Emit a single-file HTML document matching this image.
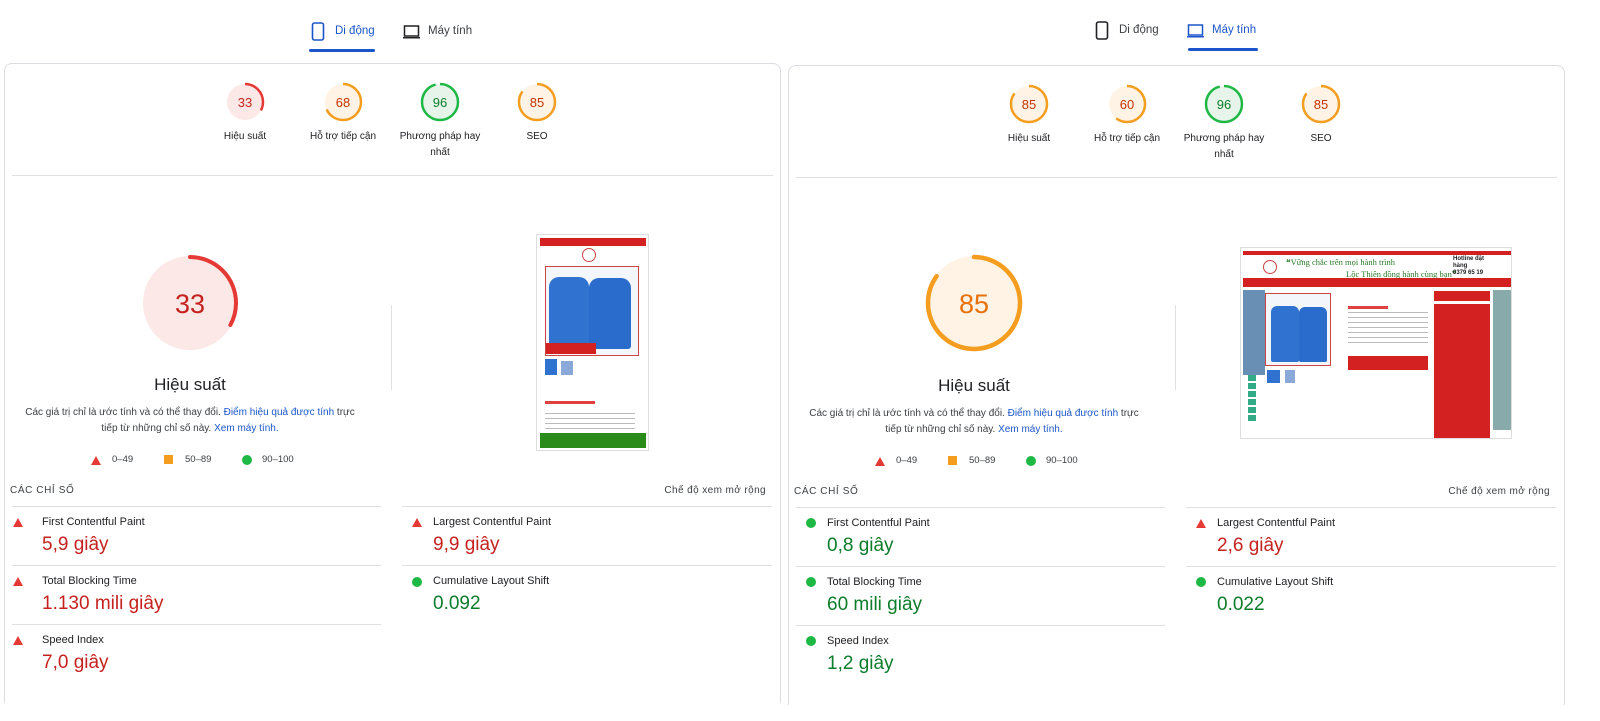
<!DOCTYPE html><html><head><meta charset="utf-8"><style>
*{margin:0;padding:0;box-sizing:border-box}
body{width:1600px;height:721px;background:#fff;font-family:"Liberation Sans","Noto Sans CJK SC",sans-serif;color:#202124;position:relative;overflow:hidden}
.p{position:absolute;top:0;width:784px;height:721px}
.a{position:absolute}
.card{position:absolute;left:4px;top:63px;width:777px;height:640px;border:1px solid #dadce0;border-bottom:none;border-radius:8px 8px 0 0}
.tab{font-size:11.5px;color:#3c4043}
.tab.on{color:#1a56c9}
.ul{height:3px;background:#1a56c9;border-radius:2px}
.g{position:absolute;width:40px;height:40px}
.gl{position:absolute;width:80px;margin-left:15px;text-align:center;font-size:10px;line-height:16px;color:#202124}
.gl.w{width:100px;margin-left:5px}
.gn{font-size:13px;font-family:"Liberation Sans",sans-serif}
.hr{position:absolute;height:1px;background:#e0e0e0}
.ml{position:absolute;font-size:11px;color:#202124}
.mv{position:absolute;font-size:19px}
.red{color:#c5221f}.grn{color:#0d7c2b}
.tri{position:absolute;width:0;height:0;border-left:5px solid transparent;border-right:5px solid transparent;border-bottom:9px solid #e53935}
.dot{position:absolute;width:10px;height:10px;border-radius:50%;background:#1eb845}
.sm{font-size:10px;color:#3c4043}
a{color:#1a56c9;text-decoration:none}
</style></head><body>

<!-- LEFT PANEL -->
<div class="p" style="left:0">
 <svg class="a" style="left:311px;top:22px" width="14" height="19" viewBox="0 0 14 19"><rect x="1.5" y="1" width="11" height="17" rx="2" fill="none" stroke="#1a56c9" stroke-width="1.6"/></svg>
 <div class="a tab on" style="left:335px;top:25px">Di động</div>
 <div class="a ul" style="left:309px;top:49px;width:66px"></div>
 <svg class="a" style="left:402px;top:25px" width="19" height="14" viewBox="0 0 19 14"><rect x="2.5" y="1" width="14" height="10" fill="none" stroke="#202124" stroke-width="1.5"/><rect x="1" y="12" width="17" height="1.5" fill="#202124"/></svg>
 <div class="a tab" style="left:428px;top:25px">Máy tính</div>
 <div class="card"></div>

 <svg class="g" style="left:225px;top:82px" viewBox="0 0 40 40"><circle cx="20" cy="20" r="18" fill="#fce8e6"/><circle cx="20" cy="20" r="18" fill="none" stroke="#e53935" stroke-width="2.5" stroke-dasharray="37 200" transform="rotate(-90 20 20)"/><text x="20" y="25" text-anchor="middle" class="gn" fill="#c5221f">33</text></svg>
 <svg class="g" style="left:323px;top:82px" viewBox="0 0 40 40"><circle cx="20" cy="20" r="18" fill="#fff3e6"/><circle cx="20" cy="20" r="18" fill="none" stroke="#f49d1e" stroke-width="2.5" stroke-dasharray="77 200" transform="rotate(-90 20 20)"/><text x="20" y="25" text-anchor="middle" class="gn" fill="#c33300">68</text></svg>
 <svg class="g" style="left:420px;top:82px" viewBox="0 0 40 40"><circle cx="20" cy="20" r="18" fill="#e6f4ea"/><circle cx="20" cy="20" r="18" fill="none" stroke="#1eb845" stroke-width="2.5" stroke-dasharray="108.5 200" transform="rotate(-90 20 20)"/><text x="20" y="25" text-anchor="middle" class="gn" fill="#0d7c2b">96</text></svg>
 <svg class="g" style="left:517px;top:82px" viewBox="0 0 40 40"><circle cx="20" cy="20" r="18" fill="#fff3e6"/><circle cx="20" cy="20" r="18" fill="none" stroke="#f49d1e" stroke-width="2.5" stroke-dasharray="96 200" transform="rotate(-90 20 20)"/><text x="20" y="25" text-anchor="middle" class="gn" fill="#c33300">85</text></svg>
 <div class="gl" style="left:190px;top:129px">Hiệu suất</div>
 <div class="gl" style="left:288px;top:129px">Hỗ trợ tiếp cận</div>
 <div class="gl w" style="left:385px;top:129px">Phương pháp hay nhất</div>
 <div class="gl" style="left:482px;top:129px">SEO</div>
 <div class="hr" style="left:12px;top:175px;width:761px"></div>

 <svg class="a" style="left:140px;top:253px" width="100" height="100" viewBox="0 0 100 100"><circle cx="50" cy="50" r="47" fill="#fce8e6"/><circle cx="50" cy="50" r="46" fill="none" stroke="#e53935" stroke-width="4" stroke-dasharray="95 400" stroke-linecap="round" transform="rotate(-90 50 50)"/><text x="50" y="60" text-anchor="middle" font-size="27" font-family="Liberation Sans" fill="#c5221f">33</text></svg>
 <div class="a" style="left:90px;top:375px;width:200px;text-align:center;font-size:17px">Hiệu suất</div>
 <div class="a sm" style="left:20px;top:405px;width:340px;text-align:center;line-height:16px">Các giá trị chỉ là ước tính và có thể thay đổi. <a>Điểm hiệu quả được tính</a> trực tiếp từ những chỉ số này. <a>Xem máy tính.</a></div>
 <div class="tri" style="left:91px;top:456px"></div><div class="a sm" style="left:112px;top:454px;font-size:9.5px">0–49</div>
 <div class="a" style="left:164px;top:455px;width:9px;height:9px;background:#f49d1e"></div><div class="a sm" style="left:185px;top:454px;font-size:9.5px">50–89</div>
 <div class="dot" style="left:242px;top:455px"></div><div class="a sm" style="left:262px;top:454px;font-size:9.5px">90–100</div>
 <div class="a" style="left:391px;top:305px;width:1px;height:85px;background:#e0e0e0"></div>

 <div class="a" style="left:536px;top:234px;width:113px;height:217px;border:1px solid #ddd;background:#fff">
  <div class="a" style="left:3px;top:3px;width:106px;height:8px;background:#d32020"></div>
  <div class="a" style="left:45px;top:13px;width:14px;height:14px;border:1px solid #c44;border-radius:50%"></div>
  <div class="a" style="left:8px;top:31px;width:94px;height:90px;border:1px solid #c44;background:#f3f6fa"></div>
  <div class="a" style="left:12px;top:42px;width:40px;height:72px;background:#2f72d0;border-radius:10px 10px 3px 3px"></div>
  <div class="a" style="left:52px;top:43px;width:42px;height:71px;background:#2a6ccc;border-radius:10px 10px 3px 3px"></div>
  <div class="a" style="left:9px;top:108px;width:50px;height:11px;background:#d32020"></div>
  <div class="a" style="left:8px;top:124px;width:12px;height:16px;background:#2f72d0"></div>
  <div class="a" style="left:24px;top:126px;width:12px;height:14px;background:#8aa8d8"></div>
  <div class="a" style="left:8px;top:166px;width:50px;height:3px;background:#e04040"></div>
  <div class="a" style="left:8px;top:178px;width:90px;height:20px;background:repeating-linear-gradient(#bbb 0 1px,#fff 1px 5px)"></div>
  <div class="a" style="left:3px;top:198px;width:106px;height:15px;background:#2a8a1a"></div>
 </div>

 <div class="a" style="left:10px;top:485px;font-size:10px;letter-spacing:.6px;color:#3c4043">CÁC CHỈ SỐ</div>
 <div class="a" style="left:600px;top:485px;width:166px;text-align:right;font-size:10px;letter-spacing:.4px;color:#3c4043">Chế độ xem mở rộng</div>
 <div class="hr" style="left:12px;top:506px;width:369px"></div>
 <div class="hr" style="left:402px;top:506px;width:370px"></div>
 <div class="hr" style="left:12px;top:565px;width:369px"></div>
 <div class="hr" style="left:402px;top:565px;width:370px"></div>
 <div class="hr" style="left:12px;top:624px;width:369px"></div>

 <div class="tri" style="left:13px;top:518px"></div><div class="ml" style="left:42px;top:516px">First Contentful Paint</div><div class="mv red" style="left:42px;top:534px">5,9 giây</div>
 <div class="tri" style="left:13px;top:577px"></div><div class="ml" style="left:42px;top:575px">Total Blocking Time</div><div class="mv red" style="left:42px;top:593px">1.130 mili giây</div>
 <div class="tri" style="left:13px;top:636px"></div><div class="ml" style="left:42px;top:634px">Speed Index</div><div class="mv red" style="left:42px;top:652px">7,0 giây</div>
 <div class="tri" style="left:412px;top:518px"></div><div class="ml" style="left:433px;top:516px">Largest Contentful Paint</div><div class="mv red" style="left:433px;top:534px">9,9 giây</div>
 <div class="dot" style="left:412px;top:577px"></div><div class="ml" style="left:433px;top:575px">Cumulative Layout Shift</div><div class="mv grn" style="left:433px;top:593px">0.092</div>
</div>

<!-- RIGHT PANEL -->
<div class="p" style="left:784px">
 <svg class="a" style="left:311px;top:21px" width="14" height="19" viewBox="0 0 14 19"><rect x="1.5" y="1" width="11" height="17" rx="2" fill="none" stroke="#202124" stroke-width="1.6"/></svg>
 <div class="a tab" style="left:335px;top:24px">Di động</div>
 <svg class="a" style="left:402px;top:24px" width="19" height="14" viewBox="0 0 19 14"><rect x="2.5" y="1" width="14" height="10" fill="none" stroke="#1a56c9" stroke-width="1.5"/><rect x="1" y="12" width="17" height="1.5" fill="#1a56c9"/></svg>
 <div class="a tab on" style="left:428px;top:24px">Máy tính</div>
 <div class="a ul" style="left:404px;top:48px;width:70px"></div>
 <div class="card" style="top:65px"></div>

 <svg class="g" style="left:225px;top:84px" viewBox="0 0 40 40"><circle cx="20" cy="20" r="18" fill="#fff3e6"/><circle cx="20" cy="20" r="18" fill="none" stroke="#f49d1e" stroke-width="2.5" stroke-dasharray="96 200" transform="rotate(-90 20 20)"/><text x="20" y="25" text-anchor="middle" class="gn" fill="#c33300">85</text></svg>
 <svg class="g" style="left:323px;top:84px" viewBox="0 0 40 40"><circle cx="20" cy="20" r="18" fill="#fff3e6"/><circle cx="20" cy="20" r="18" fill="none" stroke="#f49d1e" stroke-width="2.5" stroke-dasharray="68 200" transform="rotate(-90 20 20)"/><text x="20" y="25" text-anchor="middle" class="gn" fill="#c33300">60</text></svg>
 <svg class="g" style="left:420px;top:84px" viewBox="0 0 40 40"><circle cx="20" cy="20" r="18" fill="#e6f4ea"/><circle cx="20" cy="20" r="18" fill="none" stroke="#1eb845" stroke-width="2.5" stroke-dasharray="108.5 200" transform="rotate(-90 20 20)"/><text x="20" y="25" text-anchor="middle" class="gn" fill="#0d7c2b">96</text></svg>
 <svg class="g" style="left:517px;top:84px" viewBox="0 0 40 40"><circle cx="20" cy="20" r="18" fill="#fff3e6"/><circle cx="20" cy="20" r="18" fill="none" stroke="#f49d1e" stroke-width="2.5" stroke-dasharray="96 200" transform="rotate(-90 20 20)"/><text x="20" y="25" text-anchor="middle" class="gn" fill="#c33300">85</text></svg>
 <div class="gl" style="left:190px;top:131px">Hiệu suất</div>
 <div class="gl" style="left:288px;top:131px">Hỗ trợ tiếp cận</div>
 <div class="gl w" style="left:385px;top:131px">Phương pháp hay nhất</div>
 <div class="gl" style="left:482px;top:131px">SEO</div>
 <div class="hr" style="left:12px;top:177px;width:761px"></div>

 <svg class="a" style="left:140px;top:253px" width="100" height="100" viewBox="0 0 100 100"><circle cx="50" cy="50" r="47" fill="#fff3e6"/><circle cx="50" cy="50" r="46" fill="none" stroke="#f49d1e" stroke-width="4.5" stroke-dasharray="245 400" stroke-linecap="round" transform="rotate(-90 50 50)"/><text x="50" y="60" text-anchor="middle" font-size="27" font-family="Liberation Sans" fill="#e8710a">85</text></svg>
 <div class="a" style="left:90px;top:376px;width:200px;text-align:center;font-size:17px">Hiệu suất</div>
 <div class="a sm" style="left:20px;top:406px;width:340px;text-align:center;line-height:16px">Các giá trị chỉ là ước tính và có thể thay đổi. <a>Điểm hiệu quả được tính</a> trực tiếp từ những chỉ số này. <a>Xem máy tính.</a></div>
 <div class="tri" style="left:91px;top:457px"></div><div class="a sm" style="left:112px;top:455px;font-size:9.5px">0–49</div>
 <div class="a" style="left:164px;top:456px;width:9px;height:9px;background:#f49d1e"></div><div class="a sm" style="left:185px;top:455px;font-size:9.5px">50–89</div>
 <div class="dot" style="left:242px;top:456px"></div><div class="a sm" style="left:262px;top:455px;font-size:9.5px">90–100</div>
 <div class="a" style="left:391px;top:305px;width:1px;height:85px;background:#e0e0e0"></div>

 <div class="a" style="left:456px;top:247px;width:272px;height:192px;border:1px solid #ddd;background:#fff;overflow:hidden">
  <div class="a" style="left:2px;top:3px;width:268px;height:4px;background:#d32020"></div>
  <div class="a" style="left:22px;top:12px;width:14px;height:14px;border:1px solid #c44;border-radius:50%"></div>
  <div class="a" style="left:45px;top:9px;font-size:8.5px;color:#2a7a2a;font-family:'Liberation Serif',serif;white-space:nowrap">❝Vững chắc trên mọi hành trình</div>
  <div class="a" style="left:105px;top:21px;font-size:8.5px;color:#2a7a2a;font-family:'Liberation Serif',serif;white-space:nowrap">Lộc Thiên đồng hành cùng bạn❞</div>
  <div class="a" style="left:212px;top:8px;font-size:6px;font-weight:bold;line-height:7px">Hotline đặt<br>hàng<br>0379 65 19</div>
  <div class="a" style="left:2px;top:30px;width:268px;height:9px;background:#d32020"></div>
  <div class="a" style="left:2px;top:42px;width:22px;height:85px;background:#6a8fb5"></div>
  <div class="a" style="left:252px;top:42px;width:18px;height:140px;background:#8aa"></div>
  <div class="a" style="left:24px;top:42px;width:166px;height:145px;background:#fff"></div>
  <div class="a" style="left:24px;top:45px;width:66px;height:73px;border:1px solid #c44;background:#f3f6fa"></div>
  <div class="a" style="left:30px;top:58px;width:28px;height:56px;background:#2f72d0;border-radius:6px 6px 2px 2px"></div>
  <div class="a" style="left:58px;top:59px;width:28px;height:55px;background:#2a6ccc;border-radius:6px 6px 2px 2px"></div>
  <div class="a" style="left:26px;top:122px;width:13px;height:13px;background:#2f72d0"></div>
  <div class="a" style="left:44px;top:122px;width:10px;height:13px;background:#8aa8d8"></div>
  <div class="a" style="left:107px;top:58px;width:40px;height:3px;background:#e04040"></div>
  <div class="a" style="left:107px;top:64px;width:80px;height:34px;background:repeating-linear-gradient(#bbb 0 1px,#fff 1px 5px)"></div>
  <div class="a" style="left:107px;top:108px;width:80px;height:14px;background:#d32020"></div>
  <div class="a" style="left:193px;top:43px;width:56px;height:10px;background:#d32020"></div>
  <div class="a" style="left:193px;top:56px;width:56px;height:134px;background:#d32020"></div>
  <div class="a" style="left:7px;top:127px;width:8px;height:48px;background:repeating-linear-gradient(#3a8 0 6px,#fff 6px 8px)"></div>
 </div>

 <div class="a" style="left:10px;top:486px;font-size:10px;letter-spacing:.6px;color:#3c4043">CÁC CHỈ SỐ</div>
 <div class="a" style="left:600px;top:486px;width:166px;text-align:right;font-size:10px;letter-spacing:.4px;color:#3c4043">Chế độ xem mở rộng</div>
 <div class="hr" style="left:12px;top:507px;width:369px"></div>
 <div class="hr" style="left:402px;top:507px;width:370px"></div>
 <div class="hr" style="left:12px;top:566px;width:369px"></div>
 <div class="hr" style="left:402px;top:566px;width:370px"></div>
 <div class="hr" style="left:12px;top:625px;width:369px"></div>

 <div class="dot" style="left:22px;top:518px"></div><div class="ml" style="left:43px;top:517px">First Contentful Paint</div><div class="mv grn" style="left:43px;top:535px">0,8 giây</div>
 <div class="dot" style="left:22px;top:577px"></div><div class="ml" style="left:43px;top:576px">Total Blocking Time</div><div class="mv grn" style="left:43px;top:594px">60 mili giây</div>
 <div class="dot" style="left:22px;top:636px"></div><div class="ml" style="left:43px;top:635px">Speed Index</div><div class="mv grn" style="left:43px;top:653px">1,2 giây</div>
 <div class="tri" style="left:412px;top:519px"></div><div class="ml" style="left:433px;top:517px">Largest Contentful Paint</div><div class="mv red" style="left:433px;top:535px">2,6 giây</div>
 <div class="dot" style="left:412px;top:577px"></div><div class="ml" style="left:433px;top:576px">Cumulative Layout Shift</div><div class="mv grn" style="left:433px;top:594px">0.022</div>
</div>
</body></html>
